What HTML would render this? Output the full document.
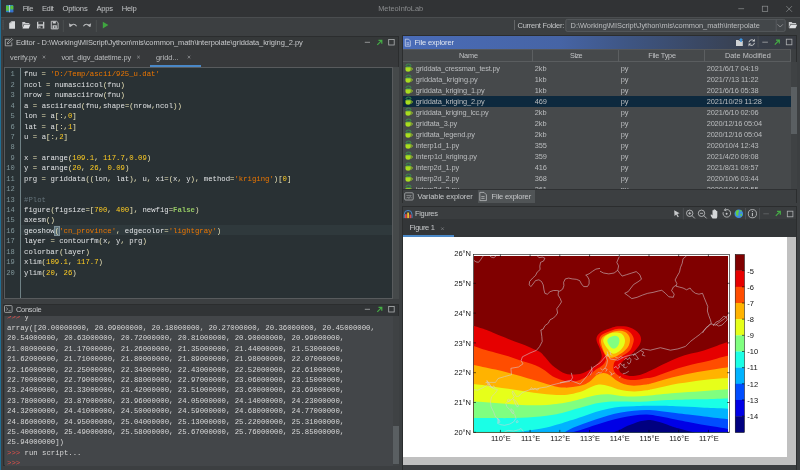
<!DOCTYPE html>
<html><head><meta charset="utf-8"><title>MeteoInfoLab</title>
<style>
*{box-sizing:border-box;margin:0;padding:0}
html,body{width:800px;height:470px;overflow:hidden;background:#3c3f41}
body{position:relative;will-change:transform;font-family:"Liberation Sans",sans-serif;font-size:7.5px;color:#bbbbbb;line-height:1}
.abs{position:absolute}
.t{position:absolute;white-space:nowrap;line-height:10px;height:10px}
#strip{left:0;top:0;width:1px;height:470px;background:#216e93}
#menubar{left:1px;top:0;width:798.5px;height:17.3px;background:#313335}
#toolbar{left:1px;top:17.3px;width:798.5px;height:17.5px;background:#3c3f41;border-top:0.6px solid #4a4d4f}
.panel{position:absolute;background:#3c3f41;border:0.7px solid #2b2d2e}
.hdr{position:absolute;left:0;right:0;top:0;height:13px;background:#353839}
/* editor */
#ed{left:3px;top:35.5px;width:395.5px;height:263.600px}
#edtabs{left:0;top:13px;width:100%;height:17.600px;background:#37393b}
#edarea{left:0.3px;top:30.200px;width:388.700px;height:232px;background:#293134;border:0.6px solid #585b5d;padding-top:1.800px;overflow:hidden;font-family:"Liberation Mono",monospace;font-size:7.3px;color:#e0e2e4}
#edsb{left:389px;top:30.200px;width:6px;height:232px;background:#45494a}
.ln{position:relative;height:10.43px;line-height:10.43px;white-space:pre}
.ln.cur::before{content:"";position:absolute;left:15.600px;right:0;top:-1.200px;height:10.430px;background:#2f393c}
.no{position:absolute;left:0;width:9.500px;text-align:right;color:#81969a;font-size:7.1px}
.tx{position:absolute;left:18.800px;right:0;top:0;height:10.43px}
#gut{left:14.900px;top:0;width:0.7px;height:233px;background:#81969a;opacity:.8}
.i{color:#e0e2e4}.o{color:#e8e2b7}.s{color:#ec7600}.n{color:#ffcd22}.c{color:#66747b}.b{color:#93c763;font-weight:bold}
.m{color:#e8e2b7;background:#5a6f77;outline:0.5px solid #7f9299}
/* console */
#con{left:3px;top:303.5px;width:395.500px;height:162.500px}
#conarea{left:0.5px;top:11.300px;width:388.500px;height:150px;overflow:hidden;font-family:"Liberation Mono",monospace;font-size:7.3px;color:#d8d8d8;background:#434649}
.cl{position:relative;left:2.500px;height:10.4px;line-height:10.4px;white-space:pre}
.pr{color:#e0504a}
#consb{left:389px;top:11.3px;width:6px;height:150.500px;background:#3f4244}
#consb i{position:absolute;left:0;top:110.500px;width:6px;height:38px;background:#5a5f62}
/* file explorer */
#fx{left:401.800px;top:34.900px;width:395.300px;height:168.200px}
#fxh{left:0;top:0;width:100%;height:12.800px;background:linear-gradient(90deg,#4a6cb8 0%,#4664a5 40%,#3e5582 58%,#3a4864 75%,#383e4a 90%,#373a40 100%)}
#fxth{left:0;top:12.800px;width:388px;height:13.800px;border-top:0.6px solid #555759;border-bottom:0.6px solid #5a5d5f;background:#46494b}
#fxth b{position:absolute;top:0;height:12.600px;width:0.7px;background:#5c5f61}
#fxrows{left:0;top:26.600px;width:388px;height:126.800px;overflow:hidden;background:#46494b}
.fr{position:relative;height:11.03px;line-height:11.03px;white-space:nowrap}
.fr.sel{background:#0d293e}
.fr span{position:absolute;top:0.2px}
.c1{left:13.500px}.c2{left:132px}.c3{left:218.200px}.c4{left:304.200px}
.jy{position:absolute;left:2.500px;top:0.700px;width:8.300px;height:9.200px}
#fxsb{left:388px;top:26.600px;width:6.300px;height:126.200px;background:#3f4244}
#fxsb i{position:absolute;left:0;top:24.500px;width:6.300px;height:47px;background:#5a5f62}
#fxtabs{left:0;top:153.400px;width:100%;height:13.400px;background:#3c3f41;border-top:0.6px solid #2f3133}
#fxtabsel{left:74.800px;top:154px;width:57.500px;height:12.800px;background:#505456}
/* figures */
#fg{left:401.800px;top:205.600px;width:395.300px;height:264.400px;border-bottom:none}
#fgh{left:0;top:0;width:100%;height:12.700px;background:#3a3d3f}
#fgtabs{left:0;top:12.700px;width:100%;height:18.300px;background:#333638}
.ul{position:absolute;height:1.600px;background:#4a88c7}
#canvas{left:403px;top:237.300px;width:393.400px;height:227.900px;background:#c0c0c0}
#white{left:403px;top:237.300px;width:384.100px;height:219.700px;background:#fff}
svg.fig{position:absolute;left:0;top:0;will-change:transform}
svg.ic{position:absolute;overflow:visible}
</style></head><body>
<div id="strip" class="abs"></div>
<div id="menubar" class="abs"></div>
<div id="toolbar" class="abs"></div>

<!-- menu -->
<svg class="ic" style="left:5.700px;top:5.200px" width="7.300" height="7.300" viewBox="0 0 8 8"><rect width="8" height="8" rx=".8" fill="#2f86c8"/><path d="M0 .8Q2 0 3.200 1.500V6.500Q1.500 5.500 0 6.500z" fill="#5cc23a"/><path d="M4.800 1Q6.500 .2 8 1V5Q6.500 4.200 4.800 5z" fill="#5cc23a"/><path d="M4.800 6Q6.500 5.500 8 6.200V8H4.800z" fill="#3d6fd0"/><rect x="3.500" y="0" width=".9" height="8" fill="#c8d8e8"/></svg>
<svg class="ic" style="left:0;top:0" width="800" height="18" viewBox="0 0 800 18"><g stroke="#8e9092" stroke-width=".7" fill="none"><path d="M738.3 8.700h5.800"/><rect x="762.300" y="6.200" width="5.400" height="5.400"/><path d="M786.300 6.100l5.700 5.700M792 6.100l-5.700 5.700"/></g></svg>

<!-- toolbar icons -->
<svg class="ic" style="left:0;top:17px" width="800" height="18" viewBox="0 0 800 18">
<g fill="#6e7072"><rect x="2.600" y="3.500" width=".9" height=".9"/><rect x="2.600" y="5.500" width=".9" height=".9"/><rect x="2.600" y="7.500" width=".9" height=".9"/><rect x="2.600" y="9.500" width=".9" height=".9"/><rect x="2.600" y="11.500" width=".9" height=".9"/></g>
<path d="M9.200 6.200L11.500 4.200H15v7.600H9.200z" fill="#d8dadc"/><path d="M9.200 6.200h2.300v-2z" fill="#9fa2a5"/>
<path d="M22.300 5h2.600l.8.900h3.600v1.200h-5.500L22.300 11z" fill="#c8cacc"/><path d="M24.200 7.600h6.200L28.800 11.400H22.500z" fill="#dfe1e3"/>
<path d="M37 4.800h7.300v6.700H37z" fill="#c8cacc"/><rect x="38.300" y="4.800" width="4.700" height="2.500" fill="#3c3f41"/><rect x="38.600" y="8.800" width="4.100" height="2.700" fill="#3c3f41"/><rect x="39.300" y="9.400" width="1.100" height="1.600" fill="#c8cacc"/>
<path d="M51.300 4.300h5.300l1.500 1.400v6.200h-6.800z" fill="none" stroke="#c8cacc" stroke-width=".9"/><rect x="52.800" y="4.500" width="3" height="2" fill="#c8cacc"/><rect x="52.600" y="8.300" width="4.200" height="3.300" fill="#c8cacc"/><rect x="54.200" y="9.300" width="1.200" height="1.500" fill="#3c3f41"/>
<path d="M63.300 3v12M96.300 3v12" stroke="#515456" stroke-width=".7"/>
<path d="M70.300 9.500C71.500 6.700 75 6.500 76.600 9.200" fill="none" stroke="#b8babc" stroke-width="1.100"/><path d="M68.900 6.300l.6 3.800 3.300-1.500z" fill="#b8babc"/>
<path d="M89.700 9.500C88.500 6.700 85 6.500 83.400 9.200" fill="none" stroke="#b8babc" stroke-width="1.100"/><path d="M91.100 6.300l-.6 3.800-3.300-1.500z" fill="#b8babc"/>
<path d="M102.800 4.800l5.600 3.300-5.600 3.300z" fill="#3fa53f"/>
<g fill="#8a8c8e"><rect x="514" y="3.500" width="1" height="1"/><rect x="514" y="5.500" width="1" height="1"/><rect x="514" y="7.500" width="1" height="1"/><rect x="514" y="9.500" width="1" height="1"/><rect x="514" y="11.500" width="1" height="1"/></g>
<rect x="565.800" y="2.400" width="219.400" height="12" rx="1.500" fill="#43474a" stroke="#606365" stroke-width=".7"/>
<path d="M776.200 2.600v11.600" stroke="#606365" stroke-width=".7"/>
<path d="M777.500 7.300l2.700 2.700 2.700-2.700" fill="none" stroke="#9a9c9e" stroke-width=".8"/>
<path d="M788.800 5h2.800l.9 1h3.600v1.300h-5.700L788.800 11z" fill="#c8cacc"/><path d="M790.800 7.700h6.400L795.500 11.300H789z" fill="#dfe1e3"/>
</svg>

<!-- EDITOR -->
<div id="ed" class="panel">
 <div class="hdr"></div>
 <div id="edtabs" class="abs"></div>
 <div class="ul" style="left:145.700px;top:28.400px;width:51.100px;height:1.900px"></div>
 <div id="edarea" class="abs">
<div class="ln"><span class="no">1</span><span class="tx"><span class="i">fnu </span><span class="o">=</span><span class="i"> </span><span class="s">'D:/Temp/ascii/925_u.dat'</span></span></div>
<div class="ln"><span class="no">2</span><span class="tx"><span class="i">ncol </span><span class="o">=</span><span class="i"> numasciicol</span><span class="o">(</span><span class="i">fnu</span><span class="o">)</span></span></div>
<div class="ln"><span class="no">3</span><span class="tx"><span class="i">nrow </span><span class="o">=</span><span class="i"> numasciirow</span><span class="o">(</span><span class="i">fnu</span><span class="o">)</span></span></div>
<div class="ln"><span class="no">4</span><span class="tx"><span class="i">a </span><span class="o">=</span><span class="i"> asciiread</span><span class="o">(</span><span class="i">fnu</span><span class="o">,</span><span class="i">shape</span><span class="o">=(</span><span class="i">nrow</span><span class="o">,</span><span class="i">ncol</span><span class="o">))</span></span></div>
<div class="ln"><span class="no">5</span><span class="tx"><span class="i">lon </span><span class="o">=</span><span class="i"> a</span><span class="o">[:,</span><span class="n">0</span><span class="o">]</span></span></div>
<div class="ln"><span class="no">6</span><span class="tx"><span class="i">lat </span><span class="o">=</span><span class="i"> a</span><span class="o">[:,</span><span class="n">1</span><span class="o">]</span></span></div>
<div class="ln"><span class="no">7</span><span class="tx"><span class="i">u </span><span class="o">=</span><span class="i"> a</span><span class="o">[:,</span><span class="n">2</span><span class="o">]</span></span></div>
<div class="ln"><span class="no">8</span><span class="tx">&nbsp;</span></div>
<div class="ln"><span class="no">9</span><span class="tx"><span class="i">x </span><span class="o">=</span><span class="i"> arange</span><span class="o">(</span><span class="n">109.1</span><span class="o">,</span><span class="i"> </span><span class="n">117.7</span><span class="o">,</span><span class="n">0.09</span><span class="o">)</span></span></div>
<div class="ln"><span class="no">10</span><span class="tx"><span class="i">y </span><span class="o">=</span><span class="i"> arange</span><span class="o">(</span><span class="n">20</span><span class="o">,</span><span class="i"> </span><span class="n">26</span><span class="o">,</span><span class="i"> </span><span class="n">0.09</span><span class="o">)</span></span></div>
<div class="ln"><span class="no">11</span><span class="tx"><span class="i">prg </span><span class="o">=</span><span class="i"> griddata</span><span class="o">((</span><span class="i">lon</span><span class="o">,</span><span class="i"> lat</span><span class="o">),</span><span class="i"> u</span><span class="o">,</span><span class="i"> xi</span><span class="o">=(</span><span class="i">x</span><span class="o">,</span><span class="i"> y</span><span class="o">),</span><span class="i"> method</span><span class="o">=</span><span class="s">'kriging'</span><span class="o">)[</span><span class="n">0</span><span class="o">]</span></span></div>
<div class="ln"><span class="no">12</span><span class="tx">&nbsp;</span></div>
<div class="ln"><span class="no">13</span><span class="tx"><span class="c">#Plot</span></span></div>
<div class="ln"><span class="no">14</span><span class="tx"><span class="i">figure</span><span class="o">(</span><span class="i">figsize</span><span class="o">=[</span><span class="n">700</span><span class="o">,</span><span class="i"> </span><span class="n">400</span><span class="o">],</span><span class="i"> newfig</span><span class="o">=</span><span class="b">False</span><span class="o">)</span></span></div>
<div class="ln"><span class="no">15</span><span class="tx"><span class="i">axesm</span><span class="o">()</span></span></div>
<div class="ln cur"><span class="no">16</span><span class="tx"><span class="i">geoshow</span><span class="m">(</span><span class="s">'cn_province'</span><span class="o">,</span><span class="i"> edgecolor</span><span class="o">=</span><span class="s">'lightgray'</span><span class="o">)</span></span></div>
<div class="ln"><span class="no">17</span><span class="tx"><span class="i">layer </span><span class="o">=</span><span class="i"> contourfm</span><span class="o">(</span><span class="i">x</span><span class="o">,</span><span class="i"> y</span><span class="o">,</span><span class="i"> prg</span><span class="o">)</span></span></div>
<div class="ln"><span class="no">18</span><span class="tx"><span class="i">colorbar</span><span class="o">(</span><span class="i">layer</span><span class="o">)</span></span></div>
<div class="ln"><span class="no">19</span><span class="tx"><span class="i">xlim</span><span class="o">(</span><span class="n">109.1</span><span class="o">,</span><span class="i"> </span><span class="n">117.7</span><span class="o">)</span></span></div>
<div class="ln"><span class="no">20</span><span class="tx"><span class="i">ylim</span><span class="o">(</span><span class="n">20</span><span class="o">,</span><span class="i"> </span><span class="n">26</span><span class="o">)</span></span></div>
  <div id="gut" class="abs"></div>
 </div>
 <div id="edsb" class="abs"></div>
</div>
<svg class="ic" style="left:0;top:35px" width="400" height="32" viewBox="0 0 400 32">
 <g fill="none" stroke="#b0b2b4" stroke-width=".8"><path d="M9.500 4.300H5.300v6.500h6.500V7.500"/><path d="M7.300 8.800l.4-1.600 3.800-3.800 1.200 1.200-3.800 3.800z"/></g>
 <path d="M364.800 7.300h5.200" stroke="#a8aaac" stroke-width=".8"/>
 <path d="M377.300 9.800l4.200-4.200M378.500 5.400h3.300v3.300" fill="none" stroke="#45ad45" stroke-width="1.200"/>
 <rect x="388.700" y="4.500" width="5.500" height="5.500" fill="none" stroke="#b0b2b4" stroke-width=".8"/>
 <g stroke="#9c9ea0" stroke-width=".7"><path d="M42.700 20.800l2.600 2.600M45.300 20.800l-2.600 2.600M137.200 20.800l2.600 2.600M139.800 20.800l-2.600 2.600M187.700 20.800l2.600 2.600M190.300 20.800l-2.600 2.600"/></g>
</svg>

<!-- CONSOLE -->
<div id="con" class="panel">
 <div class="hdr" style="height:11.300px;background:#313436"></div>
 <div id="conarea" class="abs"><div style="position:absolute;left:0;top:-3.200px;width:100%">
<div class="cl" style="top:-0.9px"><span class="pr">&gt;&gt;&gt;</span> y</div>
<div class="cl">array([20.00000000, 20.09000000, 20.18000000, 20.27000000, 20.36000000, 20.45000000,</div>
<div class="cl">20.54000000, 20.63000000, 20.72000000, 20.81000000, 20.90000000, 20.99000000,</div>
<div class="cl">21.08000000, 21.17000000, 21.26000000, 21.35000000, 21.44000000, 21.53000000,</div>
<div class="cl">21.62000000, 21.71000000, 21.80000000, 21.89000000, 21.98000000, 22.07000000,</div>
<div class="cl">22.16000000, 22.25000000, 22.34000000, 22.43000000, 22.52000000, 22.61000000,</div>
<div class="cl">22.70000000, 22.79000000, 22.88000000, 22.97000000, 23.06000000, 23.15000000,</div>
<div class="cl">23.24000000, 23.33000000, 23.42000000, 23.51000000, 23.60000000, 23.69000000,</div>
<div class="cl">23.78000000, 23.87000000, 23.96000000, 24.05000000, 24.14000000, 24.23000000,</div>
<div class="cl">24.32000000, 24.41000000, 24.50000000, 24.59000000, 24.68000000, 24.77000000,</div>
<div class="cl">24.86000000, 24.95000000, 25.04000000, 25.13000000, 25.22000000, 25.31000000,</div>
<div class="cl">25.40000000, 25.49000000, 25.58000000, 25.67000000, 25.76000000, 25.85000000,</div>
<div class="cl">25.94000000])</div>
<div class="cl"><span class="pr">&gt;&gt;&gt;</span> run script...</div>
<div class="cl"><span class="pr">&gt;&gt;&gt;</span></div>
 </div></div>
 <div id="consb" class="abs"><i></i></div>
</div>
<svg class="ic" style="left:0;top:303px" width="400" height="14" viewBox="0 0 400 14">
 <rect x="4.500" y="2.600" width="7.600" height="6.800" rx=".8" fill="none" stroke="#b0b2b4" stroke-width=".8"/><path d="M6.200 4.600l1.600 1.400-1.600 1.400M8.600 7.800h2" fill="none" stroke="#b0b2b4" stroke-width=".7"/>
 <path d="M364.800 6.300h5.200" stroke="#a8aaac" stroke-width=".8"/>
 <path d="M377.300 8.800l4.200-4.200M378.500 4.400h3.300v3.300" fill="none" stroke="#45ad45" stroke-width="1.200"/>
 <rect x="388.700" y="3.500" width="5.500" height="5.500" fill="none" stroke="#b0b2b4" stroke-width=".8"/>
</svg>

<!-- FILE EXPLORER -->
<div id="fx" class="panel">
 <div id="fxh" class="abs"></div>
 <div id="fxth" class="abs"><b style="left:129.500px"></b><b style="left:215.600px"></b><b style="left:301.700px"></b><b style="left:387.300px"></b></div>
 <div id="fxrows" class="abs">
<div class="fr"><svg class="jy" viewBox="0 0 9 10"><ellipse cx="3.800" cy="2.500" rx="2.700" ry="1.300" fill="none" stroke="#3a9c4c" stroke-width=".9"/><path d="M1.300 3.900C2.200 5.200 5.400 5.200 6.300 3.900" fill="none" stroke="#3a9c4c" stroke-width=".8"/><path d="M.5 4.700H6.300V7.700Q6.300 9.400 3.400 9.400Q.5 9.400 .5 7.700Z" fill="#a9dd1f"/><path d="M6.300 5.400C8.700 5 8.700 7.900 6.300 7.700" fill="none" stroke="#a9dd1f" stroke-width=".9"/></svg></div>
<div class="fr"><svg class="jy" viewBox="0 0 9 10"><ellipse cx="3.800" cy="2.500" rx="2.700" ry="1.300" fill="none" stroke="#3a9c4c" stroke-width=".9"/><path d="M1.300 3.900C2.200 5.200 5.400 5.200 6.300 3.900" fill="none" stroke="#3a9c4c" stroke-width=".8"/><path d="M.5 4.700H6.300V7.700Q6.300 9.400 3.400 9.400Q.5 9.400 .5 7.700Z" fill="#a9dd1f"/><path d="M6.300 5.400C8.700 5 8.700 7.900 6.300 7.700" fill="none" stroke="#a9dd1f" stroke-width=".9"/></svg></div>
<div class="fr"><svg class="jy" viewBox="0 0 9 10"><ellipse cx="3.800" cy="2.500" rx="2.700" ry="1.300" fill="none" stroke="#3a9c4c" stroke-width=".9"/><path d="M1.300 3.900C2.200 5.200 5.400 5.200 6.300 3.900" fill="none" stroke="#3a9c4c" stroke-width=".8"/><path d="M.5 4.700H6.300V7.700Q6.300 9.400 3.400 9.400Q.5 9.400 .5 7.700Z" fill="#a9dd1f"/><path d="M6.300 5.400C8.700 5 8.700 7.900 6.300 7.700" fill="none" stroke="#a9dd1f" stroke-width=".9"/></svg></div>
<div class="fr sel"><svg class="jy" viewBox="0 0 9 10"><ellipse cx="3.800" cy="2.500" rx="2.700" ry="1.300" fill="none" stroke="#3a9c4c" stroke-width=".9"/><path d="M1.300 3.900C2.200 5.200 5.400 5.200 6.300 3.900" fill="none" stroke="#3a9c4c" stroke-width=".8"/><path d="M.5 4.700H6.300V7.700Q6.300 9.400 3.400 9.400Q.5 9.400 .5 7.700Z" fill="#a9dd1f"/><path d="M6.300 5.400C8.700 5 8.700 7.900 6.300 7.700" fill="none" stroke="#a9dd1f" stroke-width=".9"/></svg></div>
<div class="fr"><svg class="jy" viewBox="0 0 9 10"><ellipse cx="3.800" cy="2.500" rx="2.700" ry="1.300" fill="none" stroke="#3a9c4c" stroke-width=".9"/><path d="M1.300 3.900C2.200 5.200 5.400 5.200 6.300 3.900" fill="none" stroke="#3a9c4c" stroke-width=".8"/><path d="M.5 4.700H6.300V7.700Q6.300 9.400 3.400 9.400Q.5 9.400 .5 7.700Z" fill="#a9dd1f"/><path d="M6.300 5.400C8.700 5 8.700 7.900 6.300 7.700" fill="none" stroke="#a9dd1f" stroke-width=".9"/></svg></div>
<div class="fr"><svg class="jy" viewBox="0 0 9 10"><ellipse cx="3.800" cy="2.500" rx="2.700" ry="1.300" fill="none" stroke="#3a9c4c" stroke-width=".9"/><path d="M1.300 3.900C2.200 5.200 5.400 5.200 6.300 3.900" fill="none" stroke="#3a9c4c" stroke-width=".8"/><path d="M.5 4.700H6.300V7.700Q6.300 9.400 3.400 9.400Q.5 9.400 .5 7.700Z" fill="#a9dd1f"/><path d="M6.300 5.400C8.700 5 8.700 7.900 6.300 7.700" fill="none" stroke="#a9dd1f" stroke-width=".9"/></svg></div>
<div class="fr"><svg class="jy" viewBox="0 0 9 10"><ellipse cx="3.800" cy="2.500" rx="2.700" ry="1.300" fill="none" stroke="#3a9c4c" stroke-width=".9"/><path d="M1.300 3.900C2.200 5.200 5.400 5.200 6.300 3.900" fill="none" stroke="#3a9c4c" stroke-width=".8"/><path d="M.5 4.700H6.300V7.700Q6.300 9.400 3.400 9.400Q.5 9.400 .5 7.700Z" fill="#a9dd1f"/><path d="M6.300 5.400C8.700 5 8.700 7.900 6.300 7.700" fill="none" stroke="#a9dd1f" stroke-width=".9"/></svg></div>
<div class="fr"><svg class="jy" viewBox="0 0 9 10"><ellipse cx="3.800" cy="2.500" rx="2.700" ry="1.300" fill="none" stroke="#3a9c4c" stroke-width=".9"/><path d="M1.300 3.900C2.200 5.200 5.400 5.200 6.300 3.900" fill="none" stroke="#3a9c4c" stroke-width=".8"/><path d="M.5 4.700H6.300V7.700Q6.300 9.400 3.400 9.400Q.5 9.400 .5 7.700Z" fill="#a9dd1f"/><path d="M6.300 5.400C8.700 5 8.700 7.900 6.300 7.700" fill="none" stroke="#a9dd1f" stroke-width=".9"/></svg></div>
<div class="fr"><svg class="jy" viewBox="0 0 9 10"><ellipse cx="3.800" cy="2.500" rx="2.700" ry="1.300" fill="none" stroke="#3a9c4c" stroke-width=".9"/><path d="M1.300 3.900C2.200 5.200 5.400 5.200 6.300 3.900" fill="none" stroke="#3a9c4c" stroke-width=".8"/><path d="M.5 4.700H6.300V7.700Q6.300 9.400 3.400 9.400Q.5 9.400 .5 7.700Z" fill="#a9dd1f"/><path d="M6.300 5.400C8.700 5 8.700 7.900 6.300 7.700" fill="none" stroke="#a9dd1f" stroke-width=".9"/></svg></div>
<div class="fr"><svg class="jy" viewBox="0 0 9 10"><ellipse cx="3.800" cy="2.500" rx="2.700" ry="1.300" fill="none" stroke="#3a9c4c" stroke-width=".9"/><path d="M1.300 3.900C2.200 5.200 5.400 5.200 6.300 3.900" fill="none" stroke="#3a9c4c" stroke-width=".8"/><path d="M.5 4.700H6.300V7.700Q6.300 9.400 3.400 9.400Q.5 9.400 .5 7.700Z" fill="#a9dd1f"/><path d="M6.300 5.400C8.700 5 8.700 7.900 6.300 7.700" fill="none" stroke="#a9dd1f" stroke-width=".9"/></svg></div>
<div class="fr"><svg class="jy" viewBox="0 0 9 10"><ellipse cx="3.800" cy="2.500" rx="2.700" ry="1.300" fill="none" stroke="#3a9c4c" stroke-width=".9"/><path d="M1.300 3.900C2.200 5.200 5.400 5.200 6.300 3.900" fill="none" stroke="#3a9c4c" stroke-width=".8"/><path d="M.5 4.700H6.300V7.700Q6.300 9.400 3.400 9.400Q.5 9.400 .5 7.700Z" fill="#a9dd1f"/><path d="M6.300 5.400C8.700 5 8.700 7.900 6.300 7.700" fill="none" stroke="#a9dd1f" stroke-width=".9"/></svg></div>
<div class="fr"><svg class="jy" viewBox="0 0 9 10"><ellipse cx="3.800" cy="2.500" rx="2.700" ry="1.300" fill="none" stroke="#3a9c4c" stroke-width=".9"/><path d="M1.300 3.900C2.200 5.200 5.400 5.200 6.300 3.900" fill="none" stroke="#3a9c4c" stroke-width=".8"/><path d="M.5 4.700H6.300V7.700Q6.300 9.400 3.400 9.400Q.5 9.400 .5 7.700Z" fill="#a9dd1f"/><path d="M6.300 5.400C8.700 5 8.700 7.900 6.300 7.700" fill="none" stroke="#a9dd1f" stroke-width=".9"/></svg></div>
 </div>
 <div id="fxsb" class="abs"><i></i></div>
 <div id="fxtabs" class="abs"></div>
 <div id="fxtabsel" class="abs"></div>
</div>
<svg class="ic" style="left:399.400px;top:34.600px" width="400" height="170" viewBox="0 0 400 170">
 <g fill="none" stroke="#d8e0f0" stroke-width=".7"><path d="M6.300 4.200h3.300l1.700 1.700v5.300h-5z"/><path d="M7.500 7.800h2.600M7.500 9.300h2.600"/></g>
 <path d="M337 5h2.400l.7.800h3.700v5.200H337z" fill="#d0d2d4"/><path d="M342 3l2.100 2.100h-1.300v1.900h-1.600V5.100h-1.300z" fill="#3d95e0"/>
 <path d="M350 7.300a2.800 2.800 0 0 1 5.100-1.300M355.400 7.900a2.800 2.800 0 0 1-5.100 1.300" fill="none" stroke="#c8cacc" stroke-width="1"/><path d="M355.900 3.800v2.800h-2.800zM349.500 11.400V8.600h2.800z" fill="#c8cacc"/><path d="M359.100 1v11.500" stroke="#55585a" stroke-width=".6"/>
 <path d="M363.300 7.200h5.600" stroke="#a8aaac" stroke-width=".8"/>
 <path d="M375.800 9.600l4.200-4.200M377 5.200h3.300v3.300" fill="none" stroke="#45ad45" stroke-width="1.200"/>
 <rect x="387.300" y="4.200" width="5.600" height="5.600" fill="none" stroke="#b0b2b4" stroke-width=".8"/>
 <!-- bottom tabs icons -->
 <rect x="5.700" y="157.800" width="8.500" height="7.200" rx="1" fill="none" stroke="#b0b2b4" stroke-width=".8"/><path d="M7.300 160.400h5.300" stroke="#b0b2b4" stroke-width=".6"/><path d="M7.500 163.300c0-1.400 1.800-1.400 1.800 0M9.300 161.800v1.700M10.600 163.500v-1.600c.3-.3 1.600-.4 1.600.4v1.200" fill="none" stroke="#b0b2b4" stroke-width=".55"/>
 <g fill="none" stroke="#c0c2c4" stroke-width=".75"><path d="M80.800 157.400h4.200l2.400 2.400v5.800h-6.600z"/><path d="M82.300 161.600h3.300M82.300 163.400h3.300"/></g>
</svg>

<!-- FIGURES -->
<div id="fg" class="panel">
 <div id="fgh" class="abs"></div>
 <div id="fgtabs" class="abs"></div>
 <div class="ul" style="left:0;top:28.500px;width:51.500px;height:2.500px"></div>
</div>
<div id="canvas" class="abs"></div>
<div id="white" class="abs"></div>
<svg class="ic" style="left:399.500px;top:204.500px" width="400" height="34" viewBox="0 0 400 34">
 <path d="M4.200 13V9.300a3.900 3.900 0 0 1 7.800 0V13" fill="none" stroke="#4a8fd8" stroke-width=".9"/><rect x="4.900" y="9.200" width="1.800" height="3.900" fill="#e04848"/><rect x="7.200" y="7.600" width="1.800" height="5.500" fill="#ecc030"/><rect x="9.500" y="9.600" width="1.800" height="3.500" fill="#e04848"/>
 <path d="M274.200 5.200l5.400 3.100-2.300.6 1.500 2.800-1.100.6-1.500-2.800-1.700 1.600z" fill="#c8cacc"/>
 <path d="M283.300 3v11.500M345.500 3v11.500M359.500 3v11.500" stroke="#55585a" stroke-width=".7"/>
 <g fill="none" stroke="#c8cacc" stroke-width=".8"><circle cx="289.700" cy="8.300" r="3.200"/><path d="M292 10.600l2.800 2.800M288.200 8.300h3M289.700 6.800v3"/><circle cx="301.500" cy="8.300" r="3.200"/><path d="M303.800 10.600l2.800 2.800M300 8.300h3"/></g>
 <path d="M312.600 13.400c-1.200-1.500-2.300-3-1.900-3.600.5-.6 1.200 0 1.800.8V5.700c0-.9 1.200-.9 1.200 0V4.800c0-.9 1.200-.9 1.200 0v.6c0-.9 1.200-.9 1.200 0v.9c0-.8 1.200-.8 1.200 0v4.700c0 1.300-.5 2.400-.9 2.400z" fill="#d4d6d8"/>
 <g fill="none" stroke="#c8cacc" stroke-width=".8"><path d="M323.200 7.200a3.800 3.800 0 1 0 1.800-2.200"/><path d="M325.600 3.400l-1.300 1.900 2.200.5"/></g><circle cx="326.600" cy="8.800" r="1" fill="#c8cacc"/>
 <circle cx="338.800" cy="8.700" r="4.300" fill="#3d8ee0"/><path d="M336 6.200c1.200-1.800 3-1.200 3 0s-1.200 1.800-.6 3-1.200 2.400-1.800 1.200-1.200-2.400-.6-4.200zM340.600 9c1.200-.6 1.800.6 1.200 1.800s-1.800 0-1.200-1.800zM340 5.200c1-.3 1.800.3 1.500 1s-1.200.3-1.500-1z" fill="#62cc44"/>
 <g fill="none" stroke="#c8cacc" stroke-width=".8"><circle cx="352.400" cy="8.700" r="4.100"/><path d="M352.400 7.900v3.300M352.400 6v.9" stroke-width="1"/></g>
 <path d="M363.300 8.800h5.600" stroke="#66686a" stroke-width=".8"/>
 <path d="M375.800 10.800l4.200-4.200M377 6.400h3.300v3.300" fill="none" stroke="#45ad45" stroke-width="1.200"/>
 <rect x="387.300" y="6.200" width="5.600" height="5.600" fill="none" stroke="#b0b2b4" stroke-width=".8"/>
 <path d="M41.200 22.400l2.600 2.600M43.800 22.400l-2.600 2.600" stroke="#8a8c8e" stroke-width=".6"/>
</svg>
<span class="t" id="L0" style="left:22.7px;top:4.3px;font-size:7.6px;color:#c2c4c6;letter-spacing:-0.487px;">File</span>
<span class="t" id="L1" style="left:41.9px;top:4.3px;font-size:7.6px;color:#c2c4c6;letter-spacing:-0.348px;">Edit</span>
<span class="t" id="L2" style="left:62.6px;top:4.3px;font-size:7.6px;color:#c2c4c6;letter-spacing:-0.182px;">Options</span>
<span class="t" id="L3" style="left:96.5px;top:4.3px;font-size:7.6px;color:#c2c4c6;letter-spacing:-0.253px;">Apps</span>
<span class="t" id="L4" style="left:121.7px;top:4.3px;font-size:7.6px;color:#c2c4c6;letter-spacing:-0.231px;">Help</span>
<span class="t" id="L5" style="left:378.2px;top:4.3px;font-size:7.4px;color:#8a8c8e;letter-spacing:-0.025px;">MeteoInfoLab</span>
<span class="t" id="L6" style="left:517.5px;top:20.6px;font-size:7.5px;color:#c0c2c4;letter-spacing:-0.263px;">Current Folder:</span>
<span class="t" id="L7" style="left:570.6px;top:20.6px;font-size:7.4px;color:#bbbdbf;letter-spacing:-0.023px;">D:\Working\MIScript\Jython\mis\common_math\interpolate</span>
<span class="t" id="L8" style="left:16.0px;top:37.5px;font-size:7.5px;color:#c6c8ca;letter-spacing:-0.078px;">Editor - D:\Working\MIScript\Jython\mis\common_math\interpolate\griddata_kriging_2.py</span>
<span class="t" id="L9" style="left:10.0px;top:52.6px;font-size:7.4px;color:#bbbdbf;letter-spacing:-0.008px;">verify.py</span>
<span class="t" id="L10" style="left:61.5px;top:52.6px;font-size:7.4px;color:#bbbdbf;letter-spacing:-0.134px;">vort_digv_datetime.py</span>
<span class="t" id="L11" style="left:156.0px;top:52.6px;font-size:7.4px;color:#bbbdbf;letter-spacing:0.011px;">gridd...</span>
<span class="t" id="L12" style="left:16.0px;top:305.1px;font-size:7.5px;color:#c6c8ca;letter-spacing:-0.304px;">Console</span>
<span class="t" id="L13" style="left:414.5px;top:38.0px;font-size:7.5px;color:#e0e6f0;letter-spacing:-0.151px;">File explorer</span>
<span class="t" id="L14" style="left:459.0px;top:50.7px;font-size:7.3px;color:#c0c2c4;letter-spacing:-0.167px;">Name</span>
<span class="t" id="L15" style="left:570.1px;top:50.7px;font-size:7.3px;color:#c0c2c4;letter-spacing:-0.576px;">Size</span>
<span class="t" id="L16" style="left:648.2px;top:50.7px;font-size:7.3px;color:#c0c2c4;letter-spacing:-0.209px;">File Type</span>
<span class="t" id="L17" style="left:724.9px;top:50.7px;font-size:7.3px;color:#c0c2c4;letter-spacing:0.075px;">Date Modified</span>
<span class="t" id="L18" style="left:417.6px;top:191.7px;font-size:7.5px;color:#c6c8ca;letter-spacing:-0.055px;">Variable explorer</span>
<span class="t" id="L19" style="left:491.6px;top:191.7px;font-size:7.5px;color:#c6c8ca;letter-spacing:-0.144px;">File explorer</span>
<span class="t" id="L20" style="left:415.0px;top:208.9px;font-size:7.5px;color:#c6c8ca;letter-spacing:-0.345px;">Figures</span>
<span class="t" id="L21" style="left:409.5px;top:222.7px;font-size:7.5px;color:#c6c8ca;letter-spacing:-0.302px;">Figure 1</span>
<div class="abs" style="left:0;top:0;width:800px;height:188.800px;overflow:hidden">
<span class="t" id="L22" style="left:415.8px;top:64.0px;font-size:7.4px;color:#bbbdbf;letter-spacing:-0.186px;">griddata_cressman_test.py</span>
<span class="t" id="L23" style="left:534.8px;top:64.0px;font-size:7.4px;color:#bbbdbf;letter-spacing:-0.041px;">2kb</span>
<span class="t" id="L24" style="left:620.8px;top:64.0px;font-size:7.4px;color:#bbbdbf;letter-spacing:-0.256px;">py</span>
<span class="t" id="L25" style="left:706.7px;top:64.0px;font-size:7.4px;color:#bbbdbf;letter-spacing:-0.103px;">2021/6/17 04:19</span>
<span class="t" id="L26" style="left:415.8px;top:75.0px;font-size:7.4px;color:#bbbdbf;letter-spacing:-0.024px;">griddata_kriging.py</span>
<span class="t" id="L27" style="left:534.8px;top:75.0px;font-size:7.4px;color:#bbbdbf;letter-spacing:-0.041px;">1kb</span>
<span class="t" id="L28" style="left:620.8px;top:75.0px;font-size:7.4px;color:#bbbdbf;letter-spacing:-0.256px;">py</span>
<span class="t" id="L29" style="left:706.7px;top:75.0px;font-size:7.4px;color:#bbbdbf;letter-spacing:-0.066px;">2021/7/13 11:22</span>
<span class="t" id="L30" style="left:415.8px;top:86.1px;font-size:7.4px;color:#bbbdbf;letter-spacing:-0.089px;">griddata_kriging_1.py</span>
<span class="t" id="L31" style="left:534.8px;top:86.1px;font-size:7.4px;color:#bbbdbf;letter-spacing:-0.041px;">1kb</span>
<span class="t" id="L32" style="left:620.8px;top:86.1px;font-size:7.4px;color:#bbbdbf;letter-spacing:-0.256px;">py</span>
<span class="t" id="L33" style="left:706.7px;top:86.1px;font-size:7.4px;color:#bbbdbf;letter-spacing:-0.103px;">2021/6/16 05:38</span>
<span class="t" id="L34" style="left:415.8px;top:97.1px;font-size:7.4px;color:#bbbdbf;letter-spacing:-0.089px;">griddata_kriging_2.py</span>
<span class="t" id="L35" style="left:534.8px;top:97.1px;font-size:7.4px;color:#bbbdbf;letter-spacing:-0.181px;">469</span>
<span class="t" id="L36" style="left:620.8px;top:97.1px;font-size:7.4px;color:#bbbdbf;letter-spacing:-0.256px;">py</span>
<span class="t" id="L37" style="left:706.7px;top:97.1px;font-size:7.4px;color:#bbbdbf;letter-spacing:-0.113px;">2021/10/29 11:28</span>
<span class="t" id="L38" style="left:415.8px;top:108.1px;font-size:7.4px;color:#bbbdbf;letter-spacing:-0.121px;">griddata_kriging_lcc.py</span>
<span class="t" id="L39" style="left:534.8px;top:108.1px;font-size:7.4px;color:#bbbdbf;letter-spacing:-0.041px;">2kb</span>
<span class="t" id="L40" style="left:620.8px;top:108.1px;font-size:7.4px;color:#bbbdbf;letter-spacing:-0.256px;">py</span>
<span class="t" id="L41" style="left:706.7px;top:108.1px;font-size:7.4px;color:#bbbdbf;letter-spacing:-0.103px;">2021/6/10 02:06</span>
<span class="t" id="L42" style="left:415.8px;top:119.2px;font-size:7.4px;color:#bbbdbf;letter-spacing:-0.103px;">gridtata_3.py</span>
<span class="t" id="L43" style="left:534.8px;top:119.2px;font-size:7.4px;color:#bbbdbf;letter-spacing:-0.041px;">2kb</span>
<span class="t" id="L44" style="left:620.8px;top:119.2px;font-size:7.4px;color:#bbbdbf;letter-spacing:-0.256px;">py</span>
<span class="t" id="L45" style="left:706.7px;top:119.2px;font-size:7.4px;color:#bbbdbf;letter-spacing:-0.147px;">2020/12/16 05:04</span>
<span class="t" id="L46" style="left:415.8px;top:130.2px;font-size:7.4px;color:#bbbdbf;letter-spacing:-0.102px;">gridtata_legend.py</span>
<span class="t" id="L47" style="left:534.8px;top:130.2px;font-size:7.4px;color:#bbbdbf;letter-spacing:-0.041px;">2kb</span>
<span class="t" id="L48" style="left:620.8px;top:130.2px;font-size:7.4px;color:#bbbdbf;letter-spacing:-0.256px;">py</span>
<span class="t" id="L49" style="left:706.7px;top:130.2px;font-size:7.4px;color:#bbbdbf;letter-spacing:-0.147px;">2020/12/16 05:04</span>
<span class="t" id="L50" style="left:415.8px;top:141.2px;font-size:7.4px;color:#bbbdbf;letter-spacing:-0.123px;">interp1d_1.py</span>
<span class="t" id="L51" style="left:534.8px;top:141.2px;font-size:7.4px;color:#bbbdbf;letter-spacing:-0.181px;">355</span>
<span class="t" id="L52" style="left:620.8px;top:141.2px;font-size:7.4px;color:#bbbdbf;letter-spacing:-0.256px;">py</span>
<span class="t" id="L53" style="left:706.7px;top:141.2px;font-size:7.4px;color:#bbbdbf;letter-spacing:-0.103px;">2020/10/4 12:43</span>
<span class="t" id="L54" style="left:415.8px;top:152.2px;font-size:7.4px;color:#bbbdbf;letter-spacing:-0.066px;">interp1d_kriging.py</span>
<span class="t" id="L55" style="left:534.8px;top:152.2px;font-size:7.4px;color:#bbbdbf;letter-spacing:-0.181px;">359</span>
<span class="t" id="L56" style="left:620.8px;top:152.2px;font-size:7.4px;color:#bbbdbf;letter-spacing:-0.256px;">py</span>
<span class="t" id="L57" style="left:706.7px;top:152.2px;font-size:7.4px;color:#bbbdbf;letter-spacing:-0.103px;">2021/4/20 09:08</span>
<span class="t" id="L58" style="left:415.8px;top:163.3px;font-size:7.4px;color:#bbbdbf;letter-spacing:-0.123px;">interp2d_1.py</span>
<span class="t" id="L59" style="left:534.8px;top:163.3px;font-size:7.4px;color:#bbbdbf;letter-spacing:-0.181px;">416</span>
<span class="t" id="L60" style="left:620.8px;top:163.3px;font-size:7.4px;color:#bbbdbf;letter-spacing:-0.256px;">py</span>
<span class="t" id="L61" style="left:706.7px;top:163.3px;font-size:7.4px;color:#bbbdbf;letter-spacing:-0.103px;">2021/8/31 09:57</span>
<span class="t" id="L62" style="left:415.8px;top:174.3px;font-size:7.4px;color:#bbbdbf;letter-spacing:-0.123px;">interp2d_2.py</span>
<span class="t" id="L63" style="left:534.8px;top:174.3px;font-size:7.4px;color:#bbbdbf;letter-spacing:-0.181px;">368</span>
<span class="t" id="L64" style="left:620.8px;top:174.3px;font-size:7.4px;color:#bbbdbf;letter-spacing:-0.256px;">py</span>
<span class="t" id="L65" style="left:706.7px;top:174.3px;font-size:7.4px;color:#bbbdbf;letter-spacing:-0.103px;">2020/10/6 03:44</span>
<span class="t" id="L66" style="left:415.8px;top:185.3px;font-size:7.4px;color:#bbbdbf;letter-spacing:-0.123px;">interp2d_3.py</span>
<span class="t" id="L67" style="left:534.8px;top:185.3px;font-size:7.4px;color:#bbbdbf;letter-spacing:-0.181px;">361</span>
<span class="t" id="L68" style="left:620.8px;top:185.3px;font-size:7.4px;color:#bbbdbf;letter-spacing:-0.256px;">py</span>
<span class="t" id="L69" style="left:706.7px;top:185.3px;font-size:7.4px;color:#bbbdbf;letter-spacing:-0.103px;">2020/10/4 02:55</span>
</div>
<svg class="fig" width="800" height="470" viewBox="0 0 800 470">
<defs><clipPath id="cp"><rect x="473.5" y="256.0" width="254.5" height="176.3"/></clipPath></defs>
<g clip-path="url(#cp)" shape-rendering="geometricPrecision">
<rect x="473.5" y="254.5" width="256.0" height="177.8" fill="#800000"/>
<path d="M473.5 325.8C475.7 326.5 482.9 328.7 486.6 330.0C490.3 331.3 491.9 332.3 495.5 333.8C499.1 335.3 504.0 337.2 508.3 338.9C512.6 340.6 516.8 342.1 521.1 343.8C525.4 345.5 530.8 347.8 533.9 349.2C537.0 350.6 538.1 350.7 540.0 352.0C541.9 353.3 543.3 355.2 545.0 357.0C546.7 358.8 548.3 361.2 550.0 363.0C551.7 364.8 553.3 366.2 555.0 367.5C556.7 368.8 558.3 370.0 560.0 371.0C561.7 372.0 563.3 372.9 565.0 373.5C566.7 374.1 568.3 374.3 570.0 374.5C571.7 374.7 573.3 374.6 575.0 374.5C576.7 374.4 578.3 374.4 580.0 374.0C581.7 373.6 583.3 372.9 585.0 372.2C586.7 371.4 588.3 370.5 590.0 369.5C591.7 368.5 593.5 367.2 595.0 366.0C596.5 364.8 597.9 363.3 599.0 362.0C600.1 360.7 601.1 359.3 601.5 358.0C601.9 356.7 601.8 355.7 601.5 354.0C601.2 352.3 600.4 350.1 599.6 348.0C598.8 345.9 597.2 343.5 596.8 341.6C596.4 339.7 596.1 338.2 597.0 336.5C597.9 334.8 599.8 333.0 602.1 331.6C604.5 330.2 608.5 328.9 611.1 328.0C613.7 327.1 615.0 326.6 617.5 326.3C620.0 326.1 623.6 326.0 626.4 326.5C629.2 327.0 632.0 328.3 634.1 329.5C636.2 330.7 638.0 332.3 639.2 333.9C640.4 335.5 641.0 337.3 641.1 339.0C641.2 340.7 640.7 342.4 639.8 344.2C638.9 346.0 636.8 348.4 635.5 350.0C634.2 351.6 633.2 352.4 631.8 353.7C630.4 354.9 628.8 356.2 627.3 357.5C625.8 358.8 624.0 360.0 622.8 361.2C621.6 362.4 620.8 363.7 620.2 364.9C619.6 366.1 619.1 367.4 619.1 368.6C619.1 369.8 619.3 371.0 620.2 372.0C621.1 373.0 622.8 374.0 624.3 374.6C625.8 375.2 627.6 375.7 629.5 375.9C631.4 376.1 633.6 375.9 635.5 375.7C637.4 375.5 639.0 375.2 640.7 374.7C642.5 374.2 644.0 373.5 646.0 372.7C648.0 371.9 649.5 371.2 652.8 369.6C656.0 368.0 661.2 365.2 665.5 363.2C669.8 361.2 674.0 359.1 678.3 357.5C682.6 355.9 686.8 354.8 691.1 353.6C695.4 352.4 699.6 351.7 703.9 350.4C708.1 349.1 712.3 347.5 716.6 346.0C720.9 344.5 727.4 342.1 729.5 341.3L729.5 438.3 L473.5 438.3 Z" fill="#e60000"/>
<path d="M473.5 346.0C475.1 346.5 479.1 348.1 482.8 349.2C486.5 350.3 491.2 351.5 495.5 352.7C499.8 353.9 504.0 354.9 508.3 356.2C512.6 357.5 516.8 359.3 521.1 360.7C525.4 362.1 530.8 363.6 533.9 364.7C537.0 365.8 538.1 366.5 540.0 367.5C541.9 368.5 543.3 369.3 545.0 370.5C546.7 371.7 548.3 373.3 550.0 374.5C551.7 375.7 553.3 376.7 555.0 377.5C556.7 378.3 558.3 378.9 560.0 379.5C561.7 380.1 563.3 380.7 565.0 381.0C566.7 381.3 568.3 381.5 570.0 381.5C571.7 381.5 573.3 381.4 575.0 381.2C576.7 380.9 578.3 380.6 580.0 380.0C581.7 379.4 583.3 378.4 585.0 377.5C586.7 376.6 588.2 375.8 590.0 374.5C591.8 373.2 594.2 370.9 596.0 369.6C597.8 368.3 599.1 367.8 600.5 366.8C601.9 365.8 603.3 364.6 604.2 363.4C605.1 362.2 605.8 360.9 606.0 359.7C606.2 358.5 605.7 357.2 605.3 356.0C604.9 354.8 604.4 354.2 603.5 352.2C602.6 350.2 600.5 346.4 599.8 344.2C599.1 342.0 598.9 340.6 599.3 339.0C599.7 337.4 600.4 336.0 602.4 334.6C604.4 333.2 608.4 331.7 611.1 330.7C613.8 329.7 616.2 328.9 618.7 328.8C621.2 328.7 624.3 329.2 626.4 330.1C628.5 331.0 630.3 332.4 631.5 333.9C632.7 335.4 633.6 337.3 633.8 339.0C634.0 340.7 633.4 342.4 632.8 344.2C632.2 346.0 631.5 348.4 630.3 350.0C629.1 351.6 627.3 352.6 625.8 353.7C624.3 354.8 622.7 355.8 621.3 356.7C619.9 357.6 618.7 358.0 617.6 358.9C616.5 359.8 615.3 360.8 614.6 361.9C613.9 363.0 613.7 364.4 613.5 365.6C613.3 366.9 613.2 368.1 613.5 369.4C613.8 370.6 614.5 372.0 615.4 373.1C616.3 374.2 617.6 375.2 619.1 376.1C620.6 377.0 622.4 378.1 624.3 378.7C626.2 379.3 628.1 379.7 630.3 379.9C632.5 380.1 635.1 380.1 637.7 379.8C640.3 379.5 643.5 378.7 646.0 378.3C648.5 377.9 649.5 378.2 652.8 377.3C656.0 376.4 661.2 374.3 665.5 372.8C669.8 371.3 674.0 369.7 678.3 368.3C682.6 366.9 686.8 365.8 691.1 364.7C695.4 363.6 699.6 362.9 703.9 361.9C708.1 360.9 712.3 359.8 716.6 358.7C720.9 357.6 727.4 356.0 729.5 355.5L729.5 438.3 L473.5 438.3 Z" fill="#ff4d00"/>
<path d="M473.5 365.1C475.1 365.4 479.1 366.2 482.8 367.0C486.5 367.8 491.2 368.6 495.5 369.6C499.8 370.6 504.0 371.7 508.3 372.8C512.6 373.9 516.8 375.0 521.1 376.2C525.4 377.4 529.6 378.8 533.9 380.1C538.1 381.4 542.8 382.9 546.6 384.0C550.4 385.1 553.7 386.1 556.8 386.7C559.9 387.3 562.8 387.5 565.0 387.6C567.2 387.7 568.2 387.5 570.0 387.3C571.8 387.1 573.9 386.9 576.0 386.5C578.1 386.1 580.6 385.8 582.8 385.0C585.0 384.2 587.5 383.0 589.2 381.9C590.9 380.8 591.9 379.6 593.0 378.5C594.1 377.4 594.9 376.3 596.0 375.5C597.1 374.7 598.5 374.2 599.7 373.8C601.0 373.4 602.2 373.1 603.5 373.1C604.8 373.1 606.0 373.3 607.2 373.8C608.4 374.3 609.5 375.1 610.9 376.1C612.3 377.1 613.8 378.7 615.4 379.8C617.0 380.9 618.9 382.0 620.6 382.8C622.3 383.6 623.6 384.1 625.8 384.6C628.0 385.1 630.4 385.7 633.9 385.7C637.4 385.7 643.5 384.9 646.6 384.5C649.8 384.1 649.6 383.9 652.8 383.0C655.9 382.1 661.2 380.4 665.5 379.2C669.8 378.0 674.0 377.0 678.3 376.0C682.6 375.0 686.8 374.1 691.1 373.2C695.4 372.3 699.6 371.6 703.9 370.9C708.1 370.2 712.3 369.6 716.6 369.0C720.9 368.4 727.4 367.3 729.5 367.0L729.5 438.3 L473.5 438.3 Z" fill="#ffb300"/>
<path d="M604.5 353.0C603.7 351.3 602.3 347.6 601.7 345.4C601.1 343.2 600.7 341.3 601.1 339.7C601.5 338.1 602.3 337.1 604.0 335.9C605.7 334.7 608.6 333.3 611.1 332.4C613.6 331.5 616.4 330.8 618.7 330.7C621.0 330.6 623.4 331.1 625.1 332.0C626.8 332.9 628.2 334.5 629.0 335.9C629.8 337.3 630.0 338.7 630.0 340.3C630.0 341.9 629.6 343.8 628.8 345.4C628.0 347.0 626.7 348.6 625.4 350.0C624.1 351.4 622.4 352.5 621.0 353.5C619.6 354.5 618.3 355.3 617.0 356.0C615.7 356.7 614.4 357.3 613.1 357.6C611.9 357.9 610.6 357.9 609.5 357.6C608.4 357.3 607.4 356.6 606.6 355.8C605.8 355.0 605.3 354.7 604.5 353.0Z" fill="#ffb300"/>
<path d="M473.5 384.0C475.1 384.2 479.1 384.5 482.8 385.0C486.5 385.5 491.2 386.4 495.5 387.0C499.8 387.6 504.0 388.2 508.3 388.8C512.6 389.4 516.8 390.1 521.1 390.8C525.4 391.5 529.6 392.2 533.9 392.8C538.1 393.4 542.4 393.9 546.6 394.3C550.9 394.7 555.5 395.1 559.4 395.1C563.3 395.1 566.1 394.9 570.0 394.2C573.9 393.5 579.5 392.0 582.8 390.9C586.1 389.8 587.9 388.4 590.0 387.5C592.1 386.6 593.7 385.8 595.5 385.3C597.3 384.8 598.5 384.4 600.6 384.5C602.7 384.6 605.9 385.5 608.3 386.1C610.7 386.7 612.9 387.7 615.0 388.3C617.1 388.9 618.0 389.5 621.1 390.0C624.2 390.5 629.6 391.4 633.9 391.5C638.1 391.6 643.5 390.7 646.6 390.3C649.8 389.9 649.6 389.7 652.8 389.0C655.9 388.3 661.2 387.1 665.5 386.2C669.8 385.3 674.0 384.4 678.3 383.6C682.6 382.9 686.8 382.3 691.1 381.7C695.4 381.1 699.6 380.6 703.9 380.1C708.1 379.6 712.3 379.2 716.6 378.8C720.9 378.4 727.4 378.0 729.5 377.9L729.5 438.3 L473.5 438.3 Z" fill="#e6ff1a"/>
<path d="M603.2 340.7C603.1 339.2 603.8 338.1 604.7 337.0C605.6 335.9 606.8 334.9 608.5 334.2C610.2 333.4 612.9 332.6 614.9 332.5C616.9 332.4 619.2 332.6 620.7 333.3C622.2 334.0 623.2 335.2 623.9 336.5C624.6 337.8 625.0 339.5 625.0 341.0C625.0 342.5 624.6 343.9 623.9 345.4C623.2 346.9 621.5 348.9 620.6 350.0C619.7 351.1 619.3 351.3 618.5 351.8C617.7 352.3 616.8 352.9 616.0 353.2C615.2 353.5 614.3 353.8 613.5 353.7C612.7 353.6 611.8 353.4 611.0 352.8C610.2 352.2 609.6 351.1 608.7 350.0C607.8 348.9 606.4 347.6 605.5 346.0C604.6 344.4 603.3 342.2 603.2 340.7Z" fill="#e6ff1a"/>
<path d="M473.5 401.5C475.1 401.6 479.1 401.8 482.8 402.0C486.5 402.2 491.2 402.7 495.5 403.0C499.8 403.3 504.0 403.7 508.3 404.0C512.6 404.3 516.8 404.7 521.1 404.9C525.4 405.1 529.6 405.3 533.9 405.3C538.1 405.3 542.4 405.3 546.6 405.0C550.9 404.7 555.5 404.1 559.4 403.6C563.3 403.1 566.1 402.7 570.0 401.8C573.9 400.9 578.5 399.6 582.8 398.5C587.0 397.4 591.2 396.0 595.5 395.3C599.8 394.6 604.0 394.2 608.3 394.3C612.6 394.4 616.8 395.6 621.1 396.0C625.4 396.4 629.6 396.6 633.9 396.6C638.1 396.6 642.4 396.2 646.6 395.8C650.9 395.4 654.6 394.9 659.4 394.4C664.2 393.9 670.7 393.4 675.5 393.0C680.3 392.6 684.0 392.4 688.3 392.1C692.6 391.8 696.8 391.5 701.1 391.2C705.4 390.9 709.2 390.5 713.9 390.2C718.6 389.9 726.9 389.4 729.5 389.2L729.5 438.3 L473.5 438.3 Z" fill="#80ff80"/>
<path d="M607.3 341.0C607.2 339.6 608.2 338.7 609.2 337.8C610.2 336.9 612.2 336.1 613.6 335.9C615.0 335.7 616.5 335.9 617.5 336.5C618.5 337.1 619.2 338.4 619.4 339.7C619.6 341.0 619.2 342.9 618.7 344.2C618.2 345.5 617.2 347.0 616.2 347.7C615.2 348.4 614.1 348.9 613.0 348.6C611.9 348.3 610.8 347.4 609.8 346.1C608.8 344.8 607.4 342.4 607.3 341.0Z" fill="#80ff80"/>
<path d="M473.5 418.1C477.2 418.1 489.7 418.1 495.5 418.1C501.3 418.1 504.0 418.2 508.3 418.1C512.6 418.1 516.8 418.0 521.1 417.8C525.4 417.6 529.6 417.3 533.9 417.0C538.1 416.7 542.4 416.4 546.6 415.8C550.9 415.2 555.5 414.4 559.4 413.5C563.3 412.6 566.1 411.8 570.0 410.7C573.9 409.6 578.5 408.3 582.8 407.1C587.0 405.9 591.2 404.5 595.5 403.6C599.8 402.7 604.0 402.1 608.3 401.7C612.6 401.3 616.8 401.5 621.1 401.5C625.4 401.5 629.6 401.7 633.9 401.7C638.1 401.7 642.4 401.6 646.6 401.4C650.9 401.2 654.6 400.8 659.4 400.5C664.2 400.2 670.7 400.0 675.5 399.8C680.3 399.6 684.0 399.5 688.3 399.4C692.6 399.3 696.8 399.3 701.1 399.2C705.4 399.1 709.2 399.0 713.9 398.9C718.6 398.8 726.9 398.6 729.5 398.5L729.5 438.3 L473.5 438.3 Z" fill="#1affe6"/>
<path d="M514.0 434.3C514.3 434.0 514.8 432.7 516.0 432.3C517.2 431.9 518.1 432.1 521.1 431.7C524.1 431.3 529.6 430.5 533.9 429.8C538.1 429.1 542.4 428.4 546.6 427.5C550.9 426.6 555.5 425.2 559.4 424.1C563.3 423.0 566.1 421.9 570.0 420.6C573.9 419.3 578.5 417.8 582.8 416.4C587.0 414.9 591.2 413.2 595.5 411.9C599.8 410.6 604.0 409.5 608.3 408.7C612.6 407.9 616.8 407.2 621.1 406.8C625.4 406.4 629.6 406.4 633.9 406.2C638.1 406.0 641.8 405.9 646.6 405.8C651.4 405.7 658.0 405.7 662.8 405.8C667.6 405.9 671.2 406.0 675.5 406.2C679.8 406.4 684.0 406.6 688.3 406.8C692.6 407.0 696.8 407.3 701.1 407.5C705.4 407.7 709.2 407.9 713.9 408.1C718.6 408.3 726.9 408.6 729.5 408.7L729.5 438.3 L514.0 438.3 Z" fill="#00b3ff"/>
<path d="M560.0 435.3C561.7 434.3 566.2 431.1 570.0 429.2C573.8 427.3 578.5 425.7 582.8 424.1C587.0 422.5 591.2 421.0 595.5 419.6C599.8 418.2 604.0 416.7 608.3 415.5C612.6 414.3 616.8 413.4 621.1 412.6C625.4 411.8 629.6 411.1 633.9 410.7C638.1 410.3 642.4 410.0 646.6 410.0C650.9 410.0 654.6 410.4 659.4 410.9C664.2 411.4 670.7 412.4 675.5 413.0C680.3 413.6 684.0 414.0 688.3 414.5C692.6 415.0 696.8 415.5 701.1 416.0C705.4 416.5 709.2 417.1 713.9 417.7C718.6 418.2 726.9 419.0 729.5 419.3L729.5 438.3 L560.0 438.3 Z" fill="#004dff"/>
<path d="M570.0 433.8C570.4 433.6 570.4 433.1 572.5 432.3C574.6 431.5 579.0 430.4 582.8 429.2C586.6 428.0 591.2 426.4 595.5 425.0C599.8 423.6 604.0 422.3 608.3 421.1C612.6 419.9 616.8 418.6 621.1 417.7C625.4 416.8 629.6 416.0 633.9 415.5C638.1 415.0 642.4 414.4 646.6 414.5C650.9 414.6 654.6 415.4 659.4 416.3C664.2 417.2 670.7 418.6 675.5 419.6C680.3 420.6 684.0 421.3 688.3 422.1C692.6 422.9 696.8 423.6 701.1 424.4C705.4 425.1 709.2 425.8 713.9 426.6C718.6 427.4 726.9 428.8 729.5 429.2L729.5 438.3 L570.0 438.3 Z" fill="#0000e6"/>
<path d="M611.0 435.3C611.5 434.8 612.3 433.3 614.0 432.3C615.7 431.3 618.9 430.2 621.1 429.2C623.3 428.1 624.9 427.0 627.0 426.0C629.1 425.0 631.7 424.2 633.9 423.4C636.1 422.6 637.9 421.8 640.0 421.3C642.1 420.8 644.6 420.4 646.6 420.2C648.6 420.0 649.6 419.9 651.7 420.2C653.8 420.5 656.4 421.2 659.4 422.1C662.4 423.0 667.3 424.8 670.0 425.7C672.7 426.6 672.5 426.6 675.5 427.5C678.5 428.4 685.3 430.3 688.3 431.1C691.3 431.9 691.9 431.8 693.4 432.3C694.9 432.8 696.4 434.0 697.0 434.3L697.0 438.3 L611.0 438.3 Z" fill="#000080"/>
<g fill="none" stroke="#d2d0d6" stroke-width="0.62" stroke-opacity="0.9"><path d="M473.7 260.2L476.0 261.9L478.5 262.3L480.5 259.9L482.3 257.1L483.6 255.6"/><path d="M489.6 255.6L491.3 257.1L493.8 257.7L495.5 256.5L495.9 255.6"/><path d="M537.2 255.6L538.9 257.7L542.3 257.1L544.9 258.2L543.5 261.1L540.6 262.3L539.8 266.2L540.1 269.6L537.2 272.1L535.5 275.5L532.6 278.1L529.6 281.5L529.2 284.9L530.9 286.6L533.0 284.0L535.5 280.6L538.9 279.8L541.5 281.5L543.2 284.9L544.0 290.0L544.9 293.4L547.4 294.2L550.0 291.7L553.4 290.5L556.8 290.5L559.8 291.2L562.7 289.1L563.9 285.7L563.6 282.3L565.3 278.9L568.7 278.1L572.1 278.9L576.3 279.3L579.7 280.6L581.5 284.0L583.7 286.6L587.4 286.6L589.1 284.0L589.1 279.8L587.4 276.4L585.7 275.2L589.1 273.8L592.5 271.3L595.9 269.1L600.0 268.4"/><path d="M558.5 291.2L558.1 295.1L560.2 298.5L561.5 301.9L559.3 305.3L556.8 308.7L557.6 313.0L555.9 315.5L553.4 318.1L550.0 319.8L548.3 323.2L544.9 325.7L543.2 329.1L540.8 330.0L540.9 330.0L541.8 336.4L542.2 341.5L539.6 346.6L536.4 350.4L530.0 353.0L522.4 356.8L521.1 360.7L523.0 363.8L518.5 367.0L510.9 368.3L511.5 374.7L504.5 376.6L498.1 378.5L495.5 382.4L486.6 382.4L489.2 386.2L493.0 388.1"/><path d="M600.0 271.2L603.5 273.0L608.8 273.9L614.1 273.0L617.7 270.3L618.6 265.9L616.8 262.4L618.6 258.0L619.8 255.8"/><path d="M617.7 270.3L620.3 273.9L622.1 276.1L626.5 274.7L631.8 273.0L636.2 271.6L639.8 274.7L641.5 279.2L638.0 281.8L633.6 284.5L630.9 288.0L628.3 291.5L624.7 293.3L628.3 295.9L631.8 298.6L637.1 297.3L642.4 295.1L647.7 293.3L653.0 292.4L658.3 291.0L661.8 290.3L665.4 293.3L668.9 296.8L673.3 297.3L674.2 294.2L671.6 290.6L673.3 287.1L676.0 285.3"/><path d="M686.6 255.8L683.0 258.8L682.2 263.3L680.4 267.7L679.5 272.1L676.9 276.5L675.1 280.0L676.9 283.6L676.0 286.2L679.5 287.1L683.0 288.0L686.6 289.8L690.1 288.0L691.9 290.6L695.4 293.3L698.9 294.2L702.5 293.3L704.2 297.7L706.0 302.1L707.8 306.5L707.4 311.0L708.7 315.4L710.4 319.8L711.3 323.3L709.5 325.1L706.0 327.7L704.2 330.4L702.5 333.0"/><path d="M713.1 326.0L715.7 322.4L719.3 320.7L721.9 318.0L723.7 316.3L726.3 317.1L727.2 319.8L724.6 322.4L721.9 325.1L718.4 326.0L715.7 324.2"/><path d="M560.0 382.8L570.0 380.3L580.1 384.1L587.6 375.3L592.6 367.8L600.2 362.7L607.7 354.0L610.2 359.0L617.7 360.2L625.2 356.5L635.3 354.0L642.8 348.9L650.3 350.2L660.4 347.7L670.4 350.2L677.9 348.9L685.5 346.4L690.5 341.4L695.5 337.6L700.5 333.9L705.5 328.9L710.6 323.8L715.6 325.1L720.6 321.3L724.4 318.8L727.6 315.6"/><path d="M571.3 372.8L572.5 377.8L570.5 380.8"/><path d="M591.4 366.5L592.1 371.5L590.1 375.3"/><path d="M473.8 389.6L477.7 390.2L482.8 387.7L486.6 385.7L489.2 383.8L487.9 381.9L486.6 380.0"/><path d="M489.2 383.8L491.7 387.0L494.3 388.9L497.5 389.6L495.5 392.8L491.7 396.6L490.4 401.7L491.1 406.8L493.6 411.9L495.5 417.0L498.7 419.6L497.5 423.4L500.7 424.7L504.5 425.3L509.6 424.1L513.4 422.1L516.0 418.3L514.7 414.5L512.1 411.9L509.6 409.4L507.0 406.8L505.8 403.6L508.3 401.1L512.1 399.2L514.1 396.6L512.1 392.8L512.8 390.9L514.7 394.0L516.6 396.6L519.2 396.0L521.1 393.4L524.9 391.5L530.0 389.6L536.4 388.9L541.5 387.7L546.6 387.0L551.7 385.1L556.8 383.8L562.0 382.6L570.0 381.3"/><path d="M504.5 431.7L508.3 430.4L513.4 431.1L518.5 429.8L521.1 428.5L523.0 431.1L523.6 432.6"/><path d="M507.0 400.4L508.3 399.2L510.2 400.2L509.0 402.0L507.0 400.4"/><path d="M510.9 408.7L512.8 410.0L514.1 412.6L512.8 413.8L511.1 411.9L510.9 408.7"/><path d="M513.4 399.2L515.3 400.4L517.0 402.7L518.5 405.5L517.5 407.1L515.7 404.9L514.7 402.3L513.4 399.2"/><path d="M497.5 418.3L499.1 419.6L500.0 422.1L498.4 422.8L497.5 418.3"/><path d="M516.0 421.5L517.5 420.6L518.3 422.1L516.6 422.8L516.0 421.5"/><path d="M485.3 383.2L487.2 381.3L489.2 383.8L490.4 386.4L492.3 387.7L493.6 385.7L494.9 387.7"/><path d="M530.0 389.6L531.3 387.7L533.2 389.2L535.1 388.3L537.0 390.2L539.0 388.7"/><path d="M607.2 351.5L607.9 354.5L606.4 357.5L607.5 360.4L606.8 364.2L605.7 367.1L604.2 368.6"/><path d="M600.5 368.6L602.7 370.1L604.9 368.3L607.2 369.4L605.7 371.6"/><path d="M596.0 374.6L598.2 372.4L600.5 373.1L602.0 371.6"/><path d="M609.4 371.6L611.6 373.1L610.9 375.3L613.1 373.8L614.6 373.1"/><path d="M613.9 367.9L616.1 366.4L617.6 368.6L619.8 367.1L618.4 364.9L620.6 363.4L622.1 365.6L624.3 364.2L623.6 367.1L625.8 367.9L627.3 366.4"/><path d="M624.3 359.7L625.8 358.2L628.0 359.7L629.5 357.5L631.0 359.7L630.3 362.7L628.8 364.2L627.3 361.9"/><path d="M633.3 356.0L634.7 353.7L637.0 356.7L638.5 358.9L636.2 359.7L634.7 358.2"/><path d="M622.8 373.8L625.8 373.1L628.8 371.2"/><path d="M619.1 377.6L620.6 376.5"/><path d="M640.7 350.7L643.7 352.2L642.2 355.2L645.2 356.0"/><path d="M615.4 357.5L618.4 358.2L620.6 356.7L622.8 357.5"/><path d="M608.7 350.7L610.9 352.2L610.2 354.5L612.4 355.2"/></g>
</g>
<rect x="473.5" y="254.5" width="256.0" height="177.8" fill="none" stroke="#222" stroke-width="0.65"/>
<path d="M500.4 432.3v-2.4M500.4 254.5v2.400M530.1 432.3v-2.4M530.1 254.5v2.400M559.8 432.3v-2.4M559.8 254.5v2.400M589.6 432.3v-2.4M589.6 254.5v2.400M619.3 432.3v-2.4M619.3 254.5v2.400M649.0 432.3v-2.4M649.0 254.5v2.400M678.7 432.3v-2.4M678.7 254.5v2.400M708.4 432.3v-2.4M708.4 254.5v2.400M473.5 432.3h2.4M729.5 432.3h-2.4M473.5 402.5h2.4M729.5 402.5h-2.4M473.5 372.7h2.4M729.5 372.7h-2.4M473.5 342.9h2.4M729.5 342.9h-2.4M473.5 313.1h2.4M729.5 313.1h-2.4M473.5 283.3h2.4M729.5 283.3h-2.4" stroke="#000" stroke-width="0.600" fill="none"/>
<g font-family='"Liberation Sans", sans-serif' font-size="7.5" fill="#111">
<text x="500.9" y="441.100" text-anchor="middle">110°E</text>
<text x="530.6" y="441.100" text-anchor="middle">111°E</text>
<text x="560.3" y="441.100" text-anchor="middle">112°E</text>
<text x="590.1" y="441.100" text-anchor="middle">113°E</text>
<text x="619.8" y="441.100" text-anchor="middle">114°E</text>
<text x="649.5" y="441.100" text-anchor="middle">115°E</text>
<text x="679.2" y="441.100" text-anchor="middle">116°E</text>
<text x="708.9" y="441.100" text-anchor="middle">117°E</text>
<text x="471" y="434.9" text-anchor="end">20°N</text>
<text x="471" y="405.1" text-anchor="end">21°N</text>
<text x="471" y="375.3" text-anchor="end">22°N</text>
<text x="471" y="345.5" text-anchor="end">23°N</text>
<text x="471" y="315.7" text-anchor="end">24°N</text>
<text x="471" y="285.9" text-anchor="end">25°N</text>
<text x="471" y="256.1" text-anchor="end">26°N</text>
</g>
<rect x="735.2" y="254.50" width="9.2" height="16.36" fill="#800000"/>
<rect x="735.2" y="270.66" width="9.2" height="16.36" fill="#e60000"/>
<rect x="735.2" y="286.83" width="9.2" height="16.36" fill="#ff4d00"/>
<rect x="735.2" y="302.99" width="9.2" height="16.36" fill="#ffb300"/>
<rect x="735.2" y="319.15" width="9.2" height="16.36" fill="#e6ff1a"/>
<rect x="735.2" y="335.32" width="9.2" height="16.36" fill="#80ff80"/>
<rect x="735.2" y="351.48" width="9.2" height="16.36" fill="#1affe6"/>
<rect x="735.2" y="367.65" width="9.2" height="16.36" fill="#00b3ff"/>
<rect x="735.2" y="383.81" width="9.2" height="16.36" fill="#004dff"/>
<rect x="735.2" y="399.97" width="9.2" height="16.36" fill="#0000e6"/>
<rect x="735.2" y="416.14" width="9.2" height="16.36" fill="#000080"/>
<rect x="735.2" y="254.5" width="9.2" height="177.8" fill="none" stroke="#000" stroke-width="0.5"/>
<g font-family='"Liberation Sans", sans-serif' font-size="7.5" fill="#111">
<path d="M744.4 270.66h-2.4" stroke="#000" stroke-width="0.6"/>
<text x="747.300" y="273.5">-5</text>
<path d="M744.4 286.83h-2.4" stroke="#000" stroke-width="0.6"/>
<text x="747.300" y="289.6">-6</text>
<path d="M744.4 302.99h-2.4" stroke="#000" stroke-width="0.6"/>
<text x="747.300" y="305.8">-7</text>
<path d="M744.4 319.15h-2.4" stroke="#000" stroke-width="0.6"/>
<text x="747.300" y="322.0">-8</text>
<path d="M744.4 335.32h-2.4" stroke="#000" stroke-width="0.6"/>
<text x="747.300" y="338.1">-9</text>
<path d="M744.4 351.48h-2.4" stroke="#000" stroke-width="0.6"/>
<text x="747.300" y="354.3">-10</text>
<path d="M744.4 367.65h-2.4" stroke="#000" stroke-width="0.6"/>
<text x="747.300" y="370.4">-11</text>
<path d="M744.4 383.81h-2.4" stroke="#000" stroke-width="0.6"/>
<text x="747.300" y="386.6">-12</text>
<path d="M744.4 399.97h-2.4" stroke="#000" stroke-width="0.6"/>
<text x="747.300" y="402.8">-13</text>
<path d="M744.4 416.14h-2.4" stroke="#000" stroke-width="0.6"/>
<text x="747.300" y="418.9">-14</text>
</g>
</svg>
</body></html>
